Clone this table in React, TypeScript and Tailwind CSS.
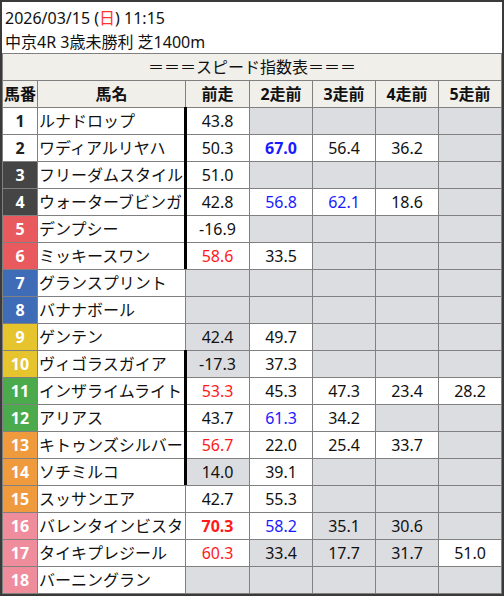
import React from 'react';

type Cell = { v?: string; g?: boolean; c?: 'r' | 'b'; b?: boolean };

interface Row {
  no: number;
  name: string;
  bar: boolean;
  cells: Cell[];
}

const W = (v: string, c?: 'r' | 'b', b?: boolean): Cell => ({ v, c, b });
const G = (v?: string): Cell => ({ v, g: true });

const waku: Record<number, string> = {
  1: 'bg-white text-[#222]',
  2: 'bg-white text-[#222]',
  3: 'bg-[#454545] text-white',
  4: 'bg-[#454545] text-white',
  5: 'bg-[#e85a5e] text-white',
  6: 'bg-[#e85a5e] text-white',
  7: 'bg-[#3f6cb7] text-white',
  8: 'bg-[#3f6cb7] text-white',
  9: 'bg-[#e5c42e] text-white',
  10: 'bg-[#e5c42e] text-white',
  11: 'bg-[#4baa4b] text-white',
  12: 'bg-[#4baa4b] text-white',
  13: 'bg-[#ef9a3d] text-white',
  14: 'bg-[#ef9a3d] text-white',
  15: 'bg-[#ef9a3d] text-white',
  16: 'bg-[#ef8d9d] text-white',
  17: 'bg-[#ef8d9d] text-white',
  18: 'bg-[#ef8d9d] text-white',
};

const rows: Row[] = [
  { no: 1, name: 'ルナドロップ', bar: true, cells: [W('43.8'), G(), G(), G(), G()] },
  { no: 2, name: 'ワディアルリヤハ', bar: true, cells: [W('50.3'), W('67.0', 'b', true), W('56.4'), W('36.2'), G()] },
  { no: 3, name: 'フリーダムスタイル', bar: true, cells: [W('51.0'), G(), G(), G(), G()] },
  { no: 4, name: 'ウォーターブビンガ', bar: true, cells: [W('42.8'), W('56.8', 'b'), W('62.1', 'b'), W('18.6'), G()] },
  { no: 5, name: 'デンプシー', bar: true, cells: [W('-16.9'), G(), G(), G(), G()] },
  { no: 6, name: 'ミッキースワン', bar: true, cells: [W('58.6', 'r'), W('33.5'), G(), G(), G()] },
  { no: 7, name: 'グランスプリント', bar: false, cells: [G(), G(), G(), G(), G()] },
  { no: 8, name: 'バナナボール', bar: false, cells: [G(), G(), G(), G(), G()] },
  { no: 9, name: 'ゲンテン', bar: false, cells: [G('42.4'), W('49.7'), G(), G(), G()] },
  { no: 10, name: 'ヴィゴラスガイア', bar: true, cells: [G('-17.3'), W('37.3'), G(), G(), G()] },
  { no: 11, name: 'インザライムライト', bar: true, cells: [W('53.3', 'r'), W('45.3'), W('47.3'), W('23.4'), W('28.2')] },
  { no: 12, name: 'アリアス', bar: true, cells: [W('43.7'), W('61.3', 'b'), W('34.2'), G(), G()] },
  { no: 13, name: 'キトゥンズシルバー', bar: true, cells: [W('56.7', 'r'), W('22.0'), W('25.4'), W('33.7'), G()] },
  { no: 14, name: 'ソチミルコ', bar: true, cells: [G('14.0'), W('39.1'), G(), G(), G()] },
  { no: 15, name: 'スッサンエア', bar: false, cells: [W('42.7'), W('55.3'), G(), G(), G()] },
  { no: 16, name: 'バレンタインビスタ', bar: false, cells: [W('70.3', 'r', true), W('58.2', 'b'), G('35.1'), G('30.6'), G()] },
  { no: 17, name: 'タイキプレジール', bar: false, cells: [W('60.3', 'r'), G('33.4'), G('17.7'), G('31.7'), W('51.0')] },
  { no: 18, name: 'バーニングラン', bar: false, cells: [G(), G(), G(), G(), G()] },
];

const heads = ['馬番', '馬名', '前走', '2走前', '3走前', '4走前', '5走前'];

function ScoreCell({ cell, bar }: { cell: Cell; bar?: boolean }) {
  const color = cell.c === 'r' ? 'text-[#ff1a1a]' : cell.c === 'b' ? 'text-[#1a1aff]' : 'text-[#111]';
  return (
    <div
      className={`relative h-[26px] flex items-center justify-center ${cell.g ? 'bg-[#dcdde1]' : 'bg-white'} ${color} ${
        cell.b ? 'font-bold' : ''
      }`}
    >
      {bar && <span className="absolute -left-[2px] -top-px h-[27px] w-[3px] bg-black" />}
      {cell.v}
    </div>
  );
}

export default function App() {
  return (
    <div className="w-[504px] h-[596px] border-2 border-[#3a3a3a] bg-white font-['Noto_Sans','Noto_Sans_CJK_JP',sans-serif] text-[16px] text-[#111]">
      <div className="h-[51px] pl-[3px] pt-[4px] leading-[24px]">
        <div>
          2026/03/15 (<span className="text-[#ff3333]">日</span>) 11:15
        </div>
        <div>中京4R 3歳未勝利 芝1400m</div>
      </div>

      <div className="grid grid-cols-[34px_147px_63px_62px_62px_62px_62px] gap-px bg-[#808080] border border-[#808080]">
        <div className="col-span-7 h-[26px] flex items-center justify-center bg-[#f0efea]">
          ＝＝＝スピード指数表＝＝＝
        </div>

        {heads.map((h) => (
          <div key={h} className="h-[26px] flex items-center justify-center bg-[#f0efea] font-bold">
            {h}
          </div>
        ))}

        {rows.map((r) => (
          <React.Fragment key={r.no}>
            <div className={`h-[26px] flex items-center justify-center font-bold ${waku[r.no]}`}>{r.no}</div>
            <div className="h-[26px] flex items-center pl-[1px] bg-white whitespace-nowrap overflow-hidden">{r.name}</div>
            {r.cells.map((c, i) => (
              <ScoreCell key={i} cell={c} bar={i === 0 && r.bar} />
            ))}
          </React.Fragment>
        ))}
      </div>
    </div>
  );
}
